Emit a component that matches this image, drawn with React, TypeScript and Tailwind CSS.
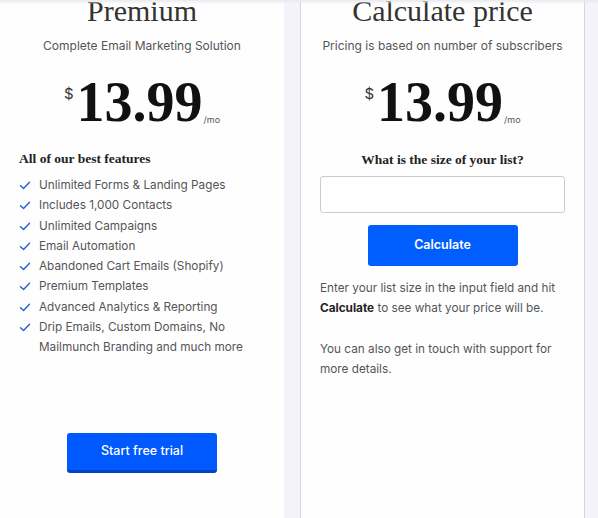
import React from 'react';

// Two pricing cards side by side: the Premium plan and the price calculator.

const SERIF = "font-['Liberation_Serif',serif]";
const SANS = "font-['Inter',sans-serif]";

const FEATURES = [
  'Unlimited Forms & Landing Pages',
  'Includes 1,000 Contacts',
  'Unlimited Campaigns',
  'Email Automation',
  'Abandoned Cart Emails (Shopify)',
  'Premium Templates',
  'Advanced Analytics & Reporting',
  'Drip Emails, Custom Domains, No Mailmunch Branding and much more',
];

function Check() {
  return (
    <svg viewBox="0 0 12 10" className="mt-[6px] h-[9px] w-[12px] shrink-0" fill="none">
      <path d="M1 5.2 L4.4 8.4 L11 1.4" stroke="#2b5fd9" strokeWidth="1.6" strokeLinecap="round" strokeLinejoin="round" />
    </svg>
  );
}

function Price() {
  return (
    <div className="mt-[18px] flex items-start justify-center text-[#111]">
      <span className={`${SANS} mt-[10px] mr-[3px] text-[15px] leading-[20px] text-[#333]`}>$</span>
      <span className={`${SERIF} text-[56px] leading-[56px] font-bold`}>13.99</span>
      <span className={`${SANS} ml-[1px] mt-[40px] text-[9px] leading-[12px] text-[#555]`}>/mo</span>
    </div>
  );
}

function Header({ title, subtitle }: { title: string; subtitle: string }) {
  return (
    <>
      <h1 className={`${SERIF} -mt-[4px] text-center text-[30px] leading-[30px] text-[#333]`}>{title}</h1>
      <p className={`${SANS} mt-[10px] text-center text-[12px] leading-[20px] text-[#555]`}>{subtitle}</p>
      <Price />
    </>
  );
}

export default function App() {
  return (
    <div className="relative flex h-[518px] w-[598px] gap-[16px] overflow-hidden bg-[#f4f3fa]">
      <div className="w-[284px] shrink-0 bg-[#fefeff] px-[19px]">
        <Header title="Premium" subtitle="Complete Email Marketing Solution" />
        <h2 className={`${SERIF} mt-[19px] text-[13.5px] leading-[20px] font-bold text-[#222]`}>All of our best features</h2>
        <ul className="mt-[6px]">
          {FEATURES.map((f) => (
            <li key={f} className={`${SANS} flex gap-[8px] text-[11.75px] leading-[20.25px] text-[#555]`}>
              <Check />
              <span>{f}</span>
            </li>
          ))}
        </ul>
        <div className="mt-[76px] flex justify-center">
          <button className={`${SANS} h-[40px] w-[150px] rounded-[3px] border-b-[3px] border-[#0043c8] bg-[#0058ff] text-[12.5px] font-medium text-white`}>
            Start free trial
          </button>
        </div>
      </div>

      <div className="w-[285px] shrink-0 border-x border-[#d6d5de] bg-[#fefeff] px-[19px]">
        <Header title="Calculate price" subtitle="Pricing is based on number of subscribers" />
        <h2 className={`${SERIF} mt-[20px] text-center text-[13.5px] leading-[20px] font-bold text-[#222]`}>What is the size of your list?</h2>
        <input className="mt-[6px] block h-[37px] w-full rounded-[3px] border border-[#cccccc] bg-white outline-none" />
        <div className="mt-[12px] flex justify-center">
          <button className={`${SANS} h-[41px] w-[150px] rounded-[3px] bg-[#005eff] text-[12.5px] font-semibold text-white`}>
            Calculate
          </button>
        </div>
        <p className={`${SANS} mt-[12px] text-[11.75px] leading-[20px] text-[#555]`}>
          Enter your list size in the input field and hit <b className="font-bold text-[#222]">Calculate</b> to see what your price will be.
        </p>
        <p className={`${SANS} mt-[21px] text-[11.75px] leading-[20px] text-[#555]`}>
          You can also get in touch with support for more details.
        </p>
      </div>

      <div className="pointer-events-none absolute inset-x-0 top-0 h-[4px] bg-gradient-to-b from-[#e9e9ee] to-transparent" />
    </div>
  );
}
